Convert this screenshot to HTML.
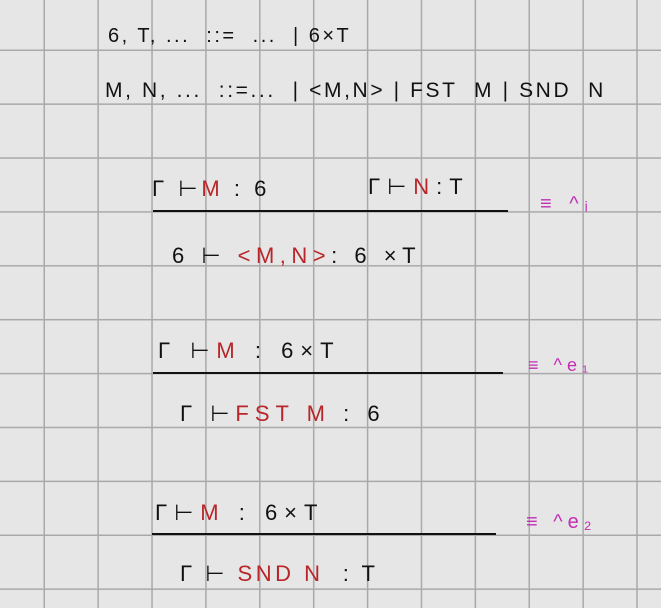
<!DOCTYPE html>
<html><head><meta charset="utf-8"><style>
body{margin:0;width:661px;height:608px;overflow:hidden;position:relative;
background-color:#e6e6e6;
background-image:linear-gradient(to right,#a9a9a9 0,#a9a9a9 1.6px,transparent 1.6px),linear-gradient(to bottom,#a9a9a9 0,#a9a9a9 1.6px,transparent 1.6px);
background-size:53.9px 53.9px;background-position:43.5px 49.5px;
font-family:"Liberation Sans","DejaVu Sans",sans-serif;color:#111}
.t{position:absolute;white-space:pre;font-size:22px;line-height:1}
.r{color:#b8262a}.m{color:#c22fb3}
.bar{position:absolute;height:2px;background:#111}
</style></head><body>
<div class="t" style="left:108px;top:26px;font-size:20px;letter-spacing:2.5px">6, T, ...  ::=  ...  | 6×T</div>
<div class="t" style="left:105px;top:80px;font-size:21px;letter-spacing:2.6px">M, N, ...  ::=...  | &lt;M,N&gt; | FST  M | SND  N</div>

<div class="t" style="left:152px;top:178px;letter-spacing:4px">Γ ⊢<span class="r">M</span> : 6</div>
<div class="t" style="left:368px;top:176px;letter-spacing:7px">Γ⊢<span class="r">N</span>:T</div>
<div class="bar" style="left:153px;top:210px;width:355px"></div>
<div class="t m" style="left:540px;top:194px;font-size:20px;letter-spacing:6px">≡ ^ᵢ</div>
<div class="t" style="left:172px;top:245px;letter-spacing:5.5px">6 ⊢ <span class="r">&lt;M,N&gt;</span>: 6 ×T</div>

<div class="t" style="left:158px;top:340px;letter-spacing:7px">Γ ⊢<span class="r">M</span> : 6×T</div>
<div class="bar" style="left:153px;top:372px;width:350px"></div>
<div class="t m" style="left:528px;top:356px;font-size:18px;letter-spacing:5px">≡ ^e₁</div>
<div class="t" style="left:180px;top:403px;letter-spacing:6px">Γ ⊢<span class="r">FST M</span> : 6</div>

<div class="t" style="left:155px;top:502px;letter-spacing:7px">Γ⊢<span class="r">M</span> : 6×T</div>
<div class="bar" style="left:152px;top:533px;width:344px"></div>
<div class="t m" style="left:526px;top:512px;font-size:20px;letter-spacing:5px">≡ ^e₂</div>
<div class="t" style="left:180px;top:563px;letter-spacing:3.5px">Γ ⊢ <span class="r">SND N</span>  : T</div>
</body></html>
